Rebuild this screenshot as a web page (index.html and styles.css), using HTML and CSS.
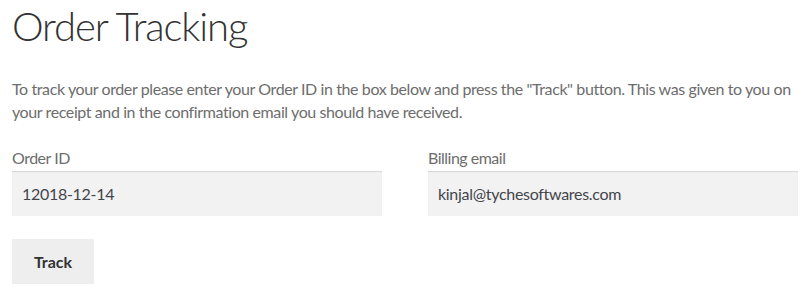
FILE: index.html
```html
<!DOCTYPE html>
<html lang="en">
<head>
<meta charset="utf-8">
<title>Order Tracking</title>
<link rel="stylesheet" href="styles.css">
</head>
<body>
<main class="page">
  <h1 class="title">Order Tracking</h1>
  <form class="track-form">
    <p class="intro">To track your order please enter your Order ID in the box below and press the "Track" button. This was given to you on your receipt and in the confirmation email you should have received.</p>
    <div class="fields">
      <div class="field">
        <label class="label" for="orderid">Order ID</label>
        <input class="input" id="orderid" type="text" value="12018-12-14">
      </div>
      <div class="field">
        <label class="label" for="email">Billing email</label>
        <input class="input" id="email" type="text" value="kinjal@tychesoftwares.com">
      </div>
    </div>
    <button class="btn" type="button">Track</button>
  </form>
</main>
</body>
</html>
```
FILE: styles.css
```css
html, body {
  margin: 0;
  padding: 0;
  background: #ffffff;
}
body {
  font-family: Lato, "Liberation Sans", sans-serif;
  color: #6d6d6d;
  font-size: 16px;
}
.page {
  width: 786px;
  padding: 0 12px;
}
.title {
  margin: 0;
  font-weight: 300;
  font-size: 40px;
  line-height: 52px;
  color: #333333;
  letter-spacing: -1.1px;
}
.track-form {
  margin: 0;
}
.intro {
  margin: 25px 0 0;
  font-size: 16px;
  line-height: 23px;
  letter-spacing: -0.4px;
}
.fields {
  display: flex;
  gap: 46px;
  margin-top: 24px;
}
.field {
  display: flex;
  flex-direction: column;
  width: 370px;
}
.label {
  font-size: 16px;
  line-height: 22px;
  letter-spacing: -0.5px;
  margin-bottom: 2px;
}
.input {
  box-sizing: border-box;
  width: 370px;
  height: 45px;
  margin: 0;
  border: 0;
  padding: 0 10px;
  background: #f2f2f2;
  box-shadow: inset 0 1px 1px rgba(0, 0, 0, 0.125);
  font-family: Lato, "Liberation Sans", sans-serif;
  font-size: 16px;
  color: #43454b;
  letter-spacing: -0.3px;
  outline: none;
}
.btn {
  display: block;
  margin-top: 23px;
  width: 82px;
  height: 45px;
  border: 0;
  padding: 0;
  background: #eeeeee;
  font-family: Lato, "Liberation Sans", sans-serif;
  font-weight: 700;
  font-size: 16px;
  color: #333333;
  cursor: pointer;
}
```
